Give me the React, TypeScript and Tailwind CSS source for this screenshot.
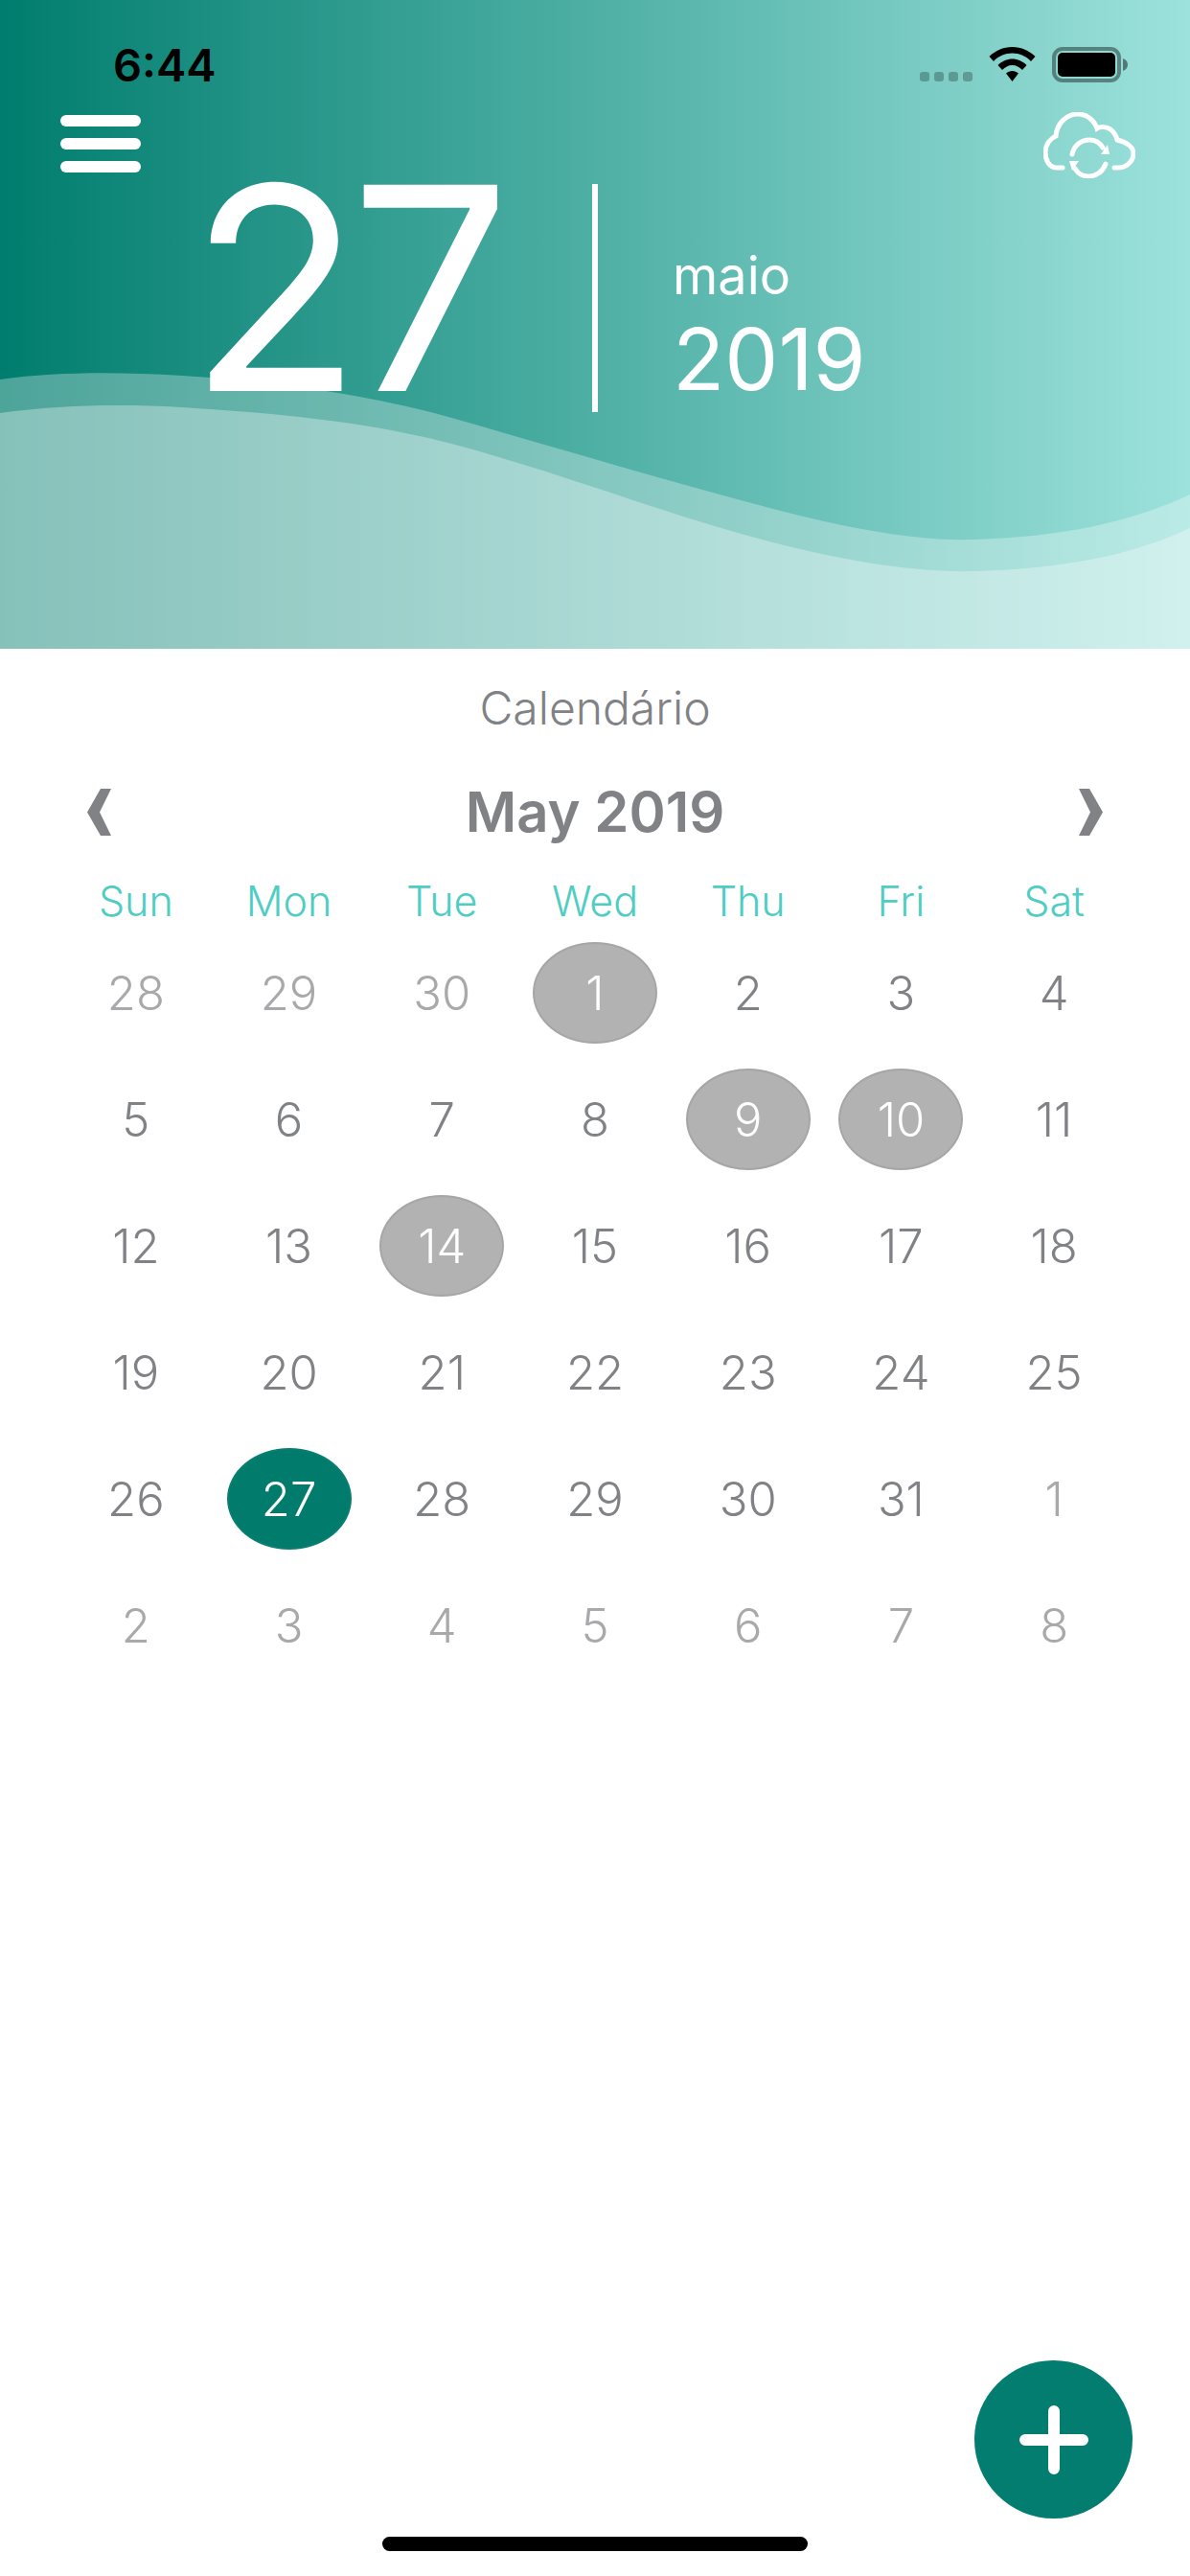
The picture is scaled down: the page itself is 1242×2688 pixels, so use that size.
const FONT = "font-['Inter','Liberation_Sans',sans-serif]";

type Day = { n: number; muted?: boolean; marked?: boolean; today?: boolean };

const m = (n: number): Day => ({ n, muted: true });
const d = (n: number): Day => ({ n });
const x = (n: number): Day => ({ n, marked: true });

const WEEKS: Day[][] = [
  [m(28), m(29), m(30), x(1), d(2), d(3), d(4)],
  [d(5), d(6), d(7), d(8), x(9), x(10), d(11)],
  [d(12), d(13), x(14), d(15), d(16), d(17), d(18)],
  [d(19), d(20), d(21), d(22), d(23), d(24), d(25)],
  [d(26), { n: 27, today: true }, d(28), d(29), d(30), d(31), m(1)],
  [m(2), m(3), m(4), m(5), m(6), m(7), m(8)],
];

const NAMES = ["Sun", "Mon", "Tue", "Wed", "Thu", "Fri", "Sat"];

function Wifi() {
  return (
    <svg width="49" height="36" viewBox="0 0 49 36" fill="#000">
      <path d="M24.5 0C15 0 6.5 4 .5 10L5 15C10 9.5 17 6.5 24.5 6.5S39 9.5 44 15L48.5 10C42.5 4 34 0 24.5 0Z" />
      <path d="M24.5 12.5C19 12.5 13.5 15 9.5 19L14 24C17 21 20.5 19 24.5 19S32 21 35 24L39.5 19C35.5 15 30 12.5 24.5 12.5Z" />
      <path d="M24.5 25C22 25 20 26 18 27.5L24.5 36 31 27.5C29 26 27 25 24.5 25Z" />
    </svg>
  );
}

function Battery() {
  return (
    <svg width="79" height="37" viewBox="0 0 79 37">
      <rect x="2" y="2" width="68" height="33" rx="9" fill="none" stroke="#000" strokeOpacity="0.4" strokeWidth="4" />
      <rect x="6" y="6" width="60" height="25" rx="5" fill="#000" />
      <path d="M74 12C77 13 79 15.500 79 18.500S77 24 74 25Z" fill="#000" fillOpacity="0.45" />
    </svg>
  );
}

function Cloud() {
  return (
    <svg width="96" height="69" viewBox="0 0 96 69" fill="none" stroke="#fff" strokeWidth="5" strokeLinecap="round">
      <path d="M20 58H14C6 58 2 50 2 42C2 33 8 27 13 25C14 12 24 2 36 2C45 2 53 8 56 17C59 15 66 15 70 18C74 21 76 25 77 29C86 31 94 36 94 43C94 52 86 58 78 58H74" />
      <path d="M30 44C32 34 40 29 48 29C54 29 59 32 62 37" />
      <path d="M65 54C62 62 55 67 47 67C41 67 36 64 33 59" />
      <path d="M69 44H60L67 34Z" fill="#fff" stroke="none" />
      <path d="M27 51H37L30 61Z" fill="#fff" stroke="none" />
    </svg>
  );
}

function Chevron({ right }: { right?: boolean }) {
  return (
    <svg width="25" height="49" viewBox="0 0 25 49" fill="#808285" className={right ? "rotate-180" : ""}>
      <path d="M14 0H25L13 24.500 25 49H14L0 24.500Z" />
    </svg>
  );
}

function DayCell({ day }: { day: Day }) {
  const base = "flex h-[106px] w-[130px] items-center justify-center rounded-[50%] text-[49px] font-[350] leading-none";
  let tone = "text-[#808285]";
  if (day.muted) tone = "text-[#a9a9ab]";
  if (day.marked) tone = "border-2 border-[#a6a6a6] bg-[#b2b2b2] text-white";
  if (day.today) tone = "border-2 border-[#0a7f71] bg-[#007b6c] text-white";
  return (
    <div className="flex h-[132px] items-center justify-center">
      <div className={`${base} ${tone}`}>{day.n}</div>
    </div>
  );
}

export default function App() {
  return (
    <div className={`${FONT} relative flex h-[2688px] w-[1242px] flex-col bg-white`}>
      <header className="relative h-[677px] overflow-hidden bg-linear-to-r/srgb from-[#007d6e] to-[#9de2dc]">
        <svg className="absolute inset-0" width="1242" height="677" viewBox="0 0 1242 677">
          <path d="M0 396C60 388 120 388 190 392C290 398 390 413 475 437C590 470 690 500 792 527C870 548 950 565 1015 563C1110 560 1180 545 1242 516V677H0Z" fill="#fff" fillOpacity="0.3" />
          <path d="M0 431C60 423 120 421 190 425C290 431 390 441 475 464C590 495 690 535 792 562C870 583 950 598 1020 596C1110 593 1180 580 1242 551V677H0Z" fill="#fff" fillOpacity="0.32" />
        </svg>
        <div className="relative flex h-[110px] items-center justify-between pl-[118px] pr-[65px] pt-[24px]">
          <span className="text-[47px] font-semibold leading-none text-black">6:44</span>
          <div className="flex items-center">
            <div className="mr-[17px] mt-[26px] flex gap-[5px]">
              <span className="h-[10px] w-[10px] rounded-[3px] bg-black/25" />
              <span className="h-[10px] w-[10px] rounded-[3px] bg-black/25" />
              <span className="h-[10px] w-[10px] rounded-[3px] bg-black/25" />
              <span className="h-[10px] w-[10px] rounded-[3px] bg-black/25" />
            </div>
            <Wifi />
            <div className="ml-[17px]">
              <Battery />
            </div>
          </div>
        </div>
        <div className="relative flex h-[76px] items-start justify-between pl-[63px] pr-[57px]">
          <div className="mt-[10px] flex w-[84px] flex-col gap-[12px]">
            <span className="h-[12px] rounded-full bg-white" />
            <span className="h-[12px] rounded-full bg-white" />
            <span className="h-[12px] rounded-full bg-white" />
          </div>
          <div className="mt-[7px]">
            <Cloud />
          </div>
        </div>
        <div className="relative flex items-start pl-[197px] text-white">
          <div className="mt-[-36px] w-[340px] text-[296px] font-normal leading-[300px] tracking-[-12px]">27</div>
          <div className="ml-[81px] mt-[6px] h-[238px] w-[6px] bg-white" />
          <div className="ml-[78px] mt-[70px] flex flex-col">
            <span className="text-[54px] font-normal leading-[64px]">maio</span>
            <span className="text-[89px] font-normal leading-[110px]">2019</span>
          </div>
        </div>
      </header>

      <main className="flex flex-col items-stretch">
        <div className="mt-[29px] text-center text-[48px] font-[350] leading-[66px] text-[#808285]">Calendário</div>
        <div className="mx-[91px] mt-[38px] flex h-[74px] items-center justify-between">
          <Chevron />
          <span className="text-[58px] font-semibold leading-none text-[#808285]">May 2019</span>
          <Chevron right />
        </div>
        <div className="mx-[62px] mt-[28px] grid grid-cols-7 text-center text-[43px] font-[350] leading-[56px] text-[#4fcdc3]">
          {NAMES.map((n) => (
            <span key={n}>{n}</span>
          ))}
        </div>
        <div className="mx-[62px] mt-[2px] grid grid-cols-7">
          {WEEKS.flat().map((day, i) => (
            <DayCell key={i} day={day} />
          ))}
        </div>
      </main>

      <button className="absolute left-[1017px] top-[2463px] flex h-[165px] w-[165px] items-center justify-center rounded-full bg-[#037d6f]">
        <svg width="72" height="72" viewBox="0 0 72 72" fill="none" stroke="#fff" strokeWidth="12" strokeLinecap="round">
          <path d="M6 36H66M36 6V66" />
        </svg>
      </button>
      <div className="absolute left-[399px] top-[2647px] h-[15px] w-[444px] rounded-full bg-black" />
    </div>
  );
}
